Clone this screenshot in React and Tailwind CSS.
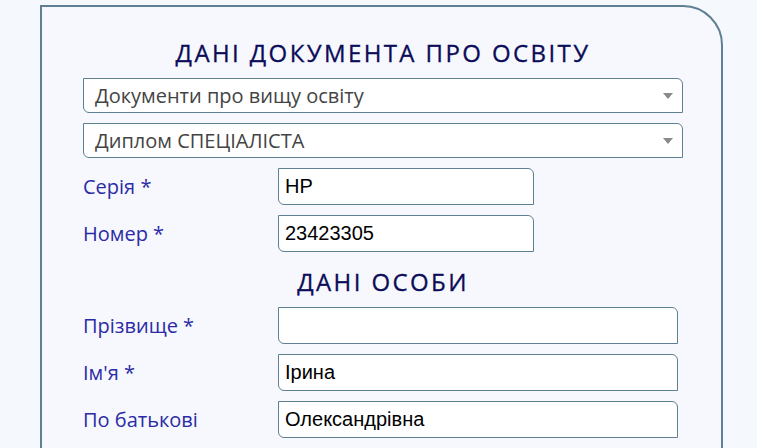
import { useState } from 'react'

function Select({ value, className = '' }) {
  return (
    <div
      className={`relative flex items-center h-[35px] bg-white border border-[#5f7f93] rounded-tr-[6px] rounded-bl-[6px] pl-[11px] pr-8 text-[20px] text-[#444444] ${className}`}
      style={{ fontFamily: '"Open Sans", sans-serif' }}
    >
      <span className="leading-none">{value}</span>
      {/* arrow */}
      <span className="absolute right-[9px] top-1/2 -translate-y-1/2 w-0 h-0 border-l-[5px] border-r-[5px] border-t-[6px] border-l-transparent border-r-transparent border-t-[#8a8a8a]" />
    </div>
  )
}

function Field({ label, value, wide, className = '' }) {
  const [val, setVal] = useState(value)
  return (
    <div className={`flex items-center ${className}`}>
      <label
        className="w-[195px] shrink-0 text-[20px] text-[#2b2ba6]"
        style={{ fontFamily: '"Open Sans", sans-serif' }}
      >
        {label}
      </label>
      <input
        type="text"
        value={val}
        onChange={(e) => setVal(e.target.value)}
        className={`${wide ? 'w-[400px]' : 'w-[256px]'} h-[37px] bg-white border border-[#5f7f93] rounded-tr-[6px] rounded-bl-[6px] px-[6px] text-[20px] text-black outline-none`}
        style={{ fontFamily: '"Liberation Sans", Arial, sans-serif' }}
      />
    </div>
  )
}

export default function App() {
  return (
    <div className="min-h-screen bg-[#f5f8fc] pt-[5px] pl-[40px] overflow-hidden">
      {/* Card */}
      <div className="w-[683px] h-[460px] border-2 border-[#5f7f93] rounded-tr-[40px] bg-[#f6f8fd] pl-[41px] pr-[38px]">
        <h2
          className="mt-[30px] h-[32px] leading-[32px] text-center text-[24px] tracking-[2.4px] text-[#0c0c58] [-webkit-text-stroke:0.3px_#0c0c58]"
          style={{ fontFamily: '"Open Sans", sans-serif' }}
        >
          ДАНІ ДОКУМЕНТА ПРО ОСВІТУ
        </h2>

        <Select value="Документи про вищу освіту" className="mt-[9px]" />
        <Select value="Диплом СПЕЦІАЛІСТА" className="mt-[10px]" />

        <Field label="Серія *" value="НР" className="mt-[10px]" />
        <Field label="Номер *" value="23423305" className="mt-[10px]" />

        <h2
          className="mt-[14px] h-[32px] leading-[32px] text-center text-[24px] tracking-[2.4px] text-[#0c0c58] [-webkit-text-stroke:0.3px_#0c0c58]"
          style={{ fontFamily: '"Open Sans", sans-serif' }}
        >
          ДАНІ ОСОБИ
        </h2>

        <Field label="Прізвище *" value="" wide className="mt-[9px]" />
        <Field label="Ім'я *" value="Ірина" wide className="mt-[10px]" />
        <Field label="По батькові" value="Олександрівна" wide className="mt-[10px]" />
      </div>
    </div>
  )
}
